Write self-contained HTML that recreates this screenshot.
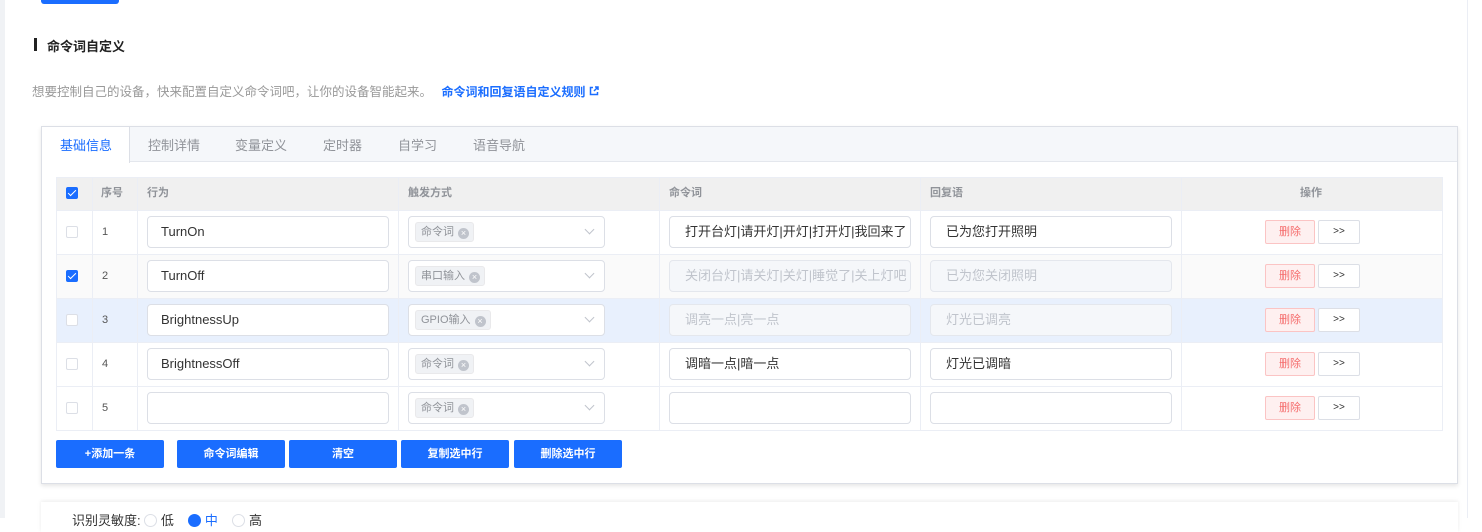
<!DOCTYPE html>
<html><head><meta charset="utf-8"><style>
*{box-sizing:border-box;margin:0;padding:0}
body{width:1482px;height:518px;overflow:hidden;background:#fff;font-family:"Liberation Sans","Noto Sans CJK SC",sans-serif;position:relative;color:#333}
.a{position:absolute}
.inp{position:absolute;height:32px;border:1px solid #dcdfe6;border-radius:4px;background:#fff;font-size:13px;color:#333;padding-left:13px;line-height:30px;white-space:nowrap;overflow:hidden}
.dis{background:#f5f7fa;border-color:#e4e7ed;color:#c0c4cc}
.tag{position:absolute;left:6px;top:5px;height:20px;background:#f0f2f5;border:1px solid #e9e9eb;border-radius:3px;font-size:11px;color:#909399;line-height:18px;padding:0 4px 0 5px}
.tag i{display:inline-block;width:11px;height:11px;border-radius:50%;background:#c0c4cc;color:#fff;font-size:9px;line-height:11px;text-align:center;font-style:normal;margin-left:4px;vertical-align:-1px}
.arr{position:absolute;right:11px;top:9px;width:7px;height:7px;border-right:1px solid #c0c4cc;border-bottom:1px solid #c0c4cc;transform:rotate(45deg)}
.cb{position:absolute;left:11px;width:12px;height:12px;border:1px solid #dcdfe6;border-radius:2px;background:#fff}
.cb.on{background:#1a6dff;border-color:#1a6dff}
.cb.on:after{content:"";position:absolute;left:3px;top:0;width:3px;height:7px;border-right:1.5px solid #fff;border-bottom:1.5px solid #fff;transform:rotate(45deg)}
.del{position:absolute;left:1265px;width:50px;height:24px;border:1px solid #fbc4c4;background:#fef0f0;color:#f56c6c;font-size:11px;text-align:center;line-height:22px;border-radius:2px}
.mv{position:absolute;left:1318px;width:42px;height:24px;border:1px solid #dcdfe6;background:#fff;color:#333;font-size:10px;text-align:center;line-height:22px;border-radius:2px}
.btn{position:absolute;top:440px;height:28px;background:#1a6dff;color:#fff;font-size:11px;font-weight:bold;text-align:center;line-height:28px;border-radius:2px}
.vl{position:absolute;top:177px;height:254px;width:1px;background:#ebeef5}
.hl{position:absolute;left:56px;width:1386px;height:1px;background:#ebeef5}
.th{position:absolute;top:177px;font-size:11px;color:#909399;font-weight:bold;line-height:33px}
.num{position:absolute;left:102px;font-size:11px;color:#555}
</style></head><body>
<div class="a" style="left:0;top:0;width:5px;height:518px;background:#f0f2f5"></div>
<div class="a" style="left:41px;top:0;width:78px;height:4px;background:#1a6dff;border-radius:0 0 3px 3px"></div>
<div class="a" style="left:34px;top:38px;width:3px;height:13px;background:#222"></div>
<div class="a" style="left:47px;top:36px;font-size:13px;font-weight:bold;color:#222">命令词自定义</div>
<div class="a" style="left:32px;top:81px;font-size:12.5px;color:#999;white-space:nowrap">想要控制自己的设备，快来配置自定义命令词吧，让你的设备智能起来。 <b style="color:#1a6dff;margin-left:6px;font-size:12px">命令词和回复语自定义规则 <svg width="10" height="10" viewBox="0 0 10 10" style="vertical-align:0"><path d="M4 1.5H1.5v7h7V6M6 1h3v3M9 1L5 5" fill="none" stroke="#1a6dff" stroke-width="1.5"/></svg></b></div>

<div class="a" style="left:41px;top:126px;width:1417px;height:358px;border:1px solid #dcdfe6;box-shadow:0 2px 4px rgba(0,0,0,.1);background:#fff"></div>
<div class="a" style="left:42px;top:127px;width:1415px;height:35px;background:#f5f7fa;border-bottom:1px solid #e4e7ed"></div>
<div class="a" style="left:42px;top:127px;width:88px;height:36px;background:#fff;border-right:1px solid #dcdfe6"></div>
<div class="a" style="top:135px;left:60px;font-size:13px;color:#1a6dff">基础信息</div>
<div class="a" style="top:135px;left:148px;font-size:13px;color:#909399">控制详情</div>
<div class="a" style="top:135px;left:235px;font-size:13px;color:#909399">变量定义</div>
<div class="a" style="top:135px;left:323px;font-size:13px;color:#909399">定时器</div>
<div class="a" style="top:135px;left:398px;font-size:13px;color:#909399">自学习</div>
<div class="a" style="top:135px;left:473px;font-size:13px;color:#909399">语音导航</div>

<div class="a" style="left:56px;top:177px;width:1386px;height:33px;background:#f0f0f0"></div>
<div class="a" style="left:56px;top:254px;width:1386px;height:44px;background:#fafafa"></div>
<div class="a" style="left:56px;top:298px;width:1386px;height:44px;background:#e8f0fd"></div>
<div class="vl" style="left:56px"></div><div class="vl" style="left:92px"></div><div class="vl" style="left:137px"></div><div class="vl" style="left:398px"></div><div class="vl" style="left:659px"></div><div class="vl" style="left:920px"></div><div class="vl" style="left:1181px"></div><div class="vl" style="left:1442px"></div>
<div class="hl" style="top:177px"></div><div class="hl" style="top:210px"></div><div class="hl" style="top:254px"></div><div class="hl" style="top:298px"></div><div class="hl" style="top:342px"></div><div class="hl" style="top:386px"></div><div class="hl" style="top:430px"></div>
<div class="cb on" style="left:66px;top:187px"></div>
<div class="th" style="left:101px">序号</div><div class="th" style="left:147px">行为</div><div class="th" style="left:408px">触发方式</div><div class="th" style="left:669px">命令词</div><div class="th" style="left:930px">回复语</div><div class="th" style="left:1300px">操作</div>

<div class="cb" style="left:66px;top:226px"></div><div class="num" style="top:226px">1</div>
<div class="inp" style="left:147px;top:216px;width:242px">TurnOn</div>
<div class="inp" style="left:408px;top:216px;width:197px"><span class="tag">命令词<i>×</i></span><span class="arr"></span></div>
<div class="inp" style="left:669px;top:216px;width:242px;padding-left:15px">打开台灯|请开灯|开灯|打开灯|我回来了</div>
<div class="inp" style="left:930px;top:216px;width:242px;padding-left:15px">已为您打开照明</div>
<div class="del" style="top:220px">删除</div><div class="mv" style="top:220px">&gt;&gt;</div>

<div class="cb on" style="left:66px;top:270px"></div><div class="num" style="top:270px">2</div>
<div class="inp" style="left:147px;top:260px;width:242px">TurnOff</div>
<div class="inp" style="left:408px;top:260px;width:197px"><span class="tag">串口输入<i>×</i></span><span class="arr"></span></div>
<div class="inp dis" style="left:669px;top:260px;width:242px;padding-left:15px">关闭台灯|请关灯|关灯|睡觉了|关上灯吧</div>
<div class="inp dis" style="left:930px;top:260px;width:242px;padding-left:15px">已为您关闭照明</div>
<div class="del" style="top:264px">删除</div><div class="mv" style="top:264px">&gt;&gt;</div>

<div class="cb" style="left:66px;top:314px"></div><div class="num" style="top:314px">3</div>
<div class="inp" style="left:147px;top:304px;width:242px">BrightnessUp</div>
<div class="inp" style="left:408px;top:304px;width:197px"><span class="tag">GPIO输入<i>×</i></span><span class="arr"></span></div>
<div class="inp dis" style="left:669px;top:304px;width:242px;padding-left:15px">调亮一点|亮一点</div>
<div class="inp dis" style="left:930px;top:304px;width:242px;padding-left:15px">灯光已调亮</div>
<div class="del" style="top:308px">删除</div><div class="mv" style="top:308px">&gt;&gt;</div>

<div class="cb" style="left:66px;top:358px"></div><div class="num" style="top:358px">4</div>
<div class="inp" style="left:147px;top:348px;width:242px">BrightnessOff</div>
<div class="inp" style="left:408px;top:348px;width:197px"><span class="tag">命令词<i>×</i></span><span class="arr"></span></div>
<div class="inp" style="left:669px;top:348px;width:242px;padding-left:15px">调暗一点|暗一点</div>
<div class="inp" style="left:930px;top:348px;width:242px;padding-left:15px">灯光已调暗</div>
<div class="del" style="top:352px">删除</div><div class="mv" style="top:352px">&gt;&gt;</div>

<div class="cb" style="left:66px;top:402px"></div><div class="num" style="top:402px">5</div>
<div class="inp" style="left:147px;top:392px;width:242px"></div>
<div class="inp" style="left:408px;top:392px;width:197px"><span class="tag">命令词<i>×</i></span><span class="arr"></span></div>
<div class="inp" style="left:669px;top:392px;width:242px"></div>
<div class="inp" style="left:930px;top:392px;width:242px"></div>
<div class="del" style="top:396px">删除</div><div class="mv" style="top:396px">&gt;&gt;</div>

<div class="btn" style="left:56px;width:108px">+添加一条</div>
<div class="btn" style="left:177px;width:108px">命令词编辑</div>
<div class="btn" style="left:289px;width:108px">清空</div>
<div class="btn" style="left:401px;width:108px">复制选中行</div>
<div class="btn" style="left:514px;width:108px">删除选中行</div>

<div class="a" style="left:41px;top:502px;width:1417px;height:30px;background:#fff;box-shadow:0 -1px 4px rgba(0,0,0,.08)"></div>
<div class="a" style="left:72px;top:510px;font-size:13px;color:#333;white-space:nowrap">识别灵敏度: <span style="display:inline-block;width:13px;height:13px;border:1px solid #dcdfe6;border-radius:50%;vertical-align:-2px"></span> 低 &nbsp; &nbsp;<span style="display:inline-block;width:13px;height:13px;background:#1a6dff;border-radius:50%;vertical-align:-2px"></span> <span style="color:#1a6dff">中</span> &nbsp; &nbsp;<span style="display:inline-block;width:13px;height:13px;border:1px solid #dcdfe6;border-radius:50%;vertical-align:-2px"></span> 高</div>
<div class="a" style="left:1467px;top:0;width:1px;height:518px;background:#ebeef5"></div>
</body></html>
